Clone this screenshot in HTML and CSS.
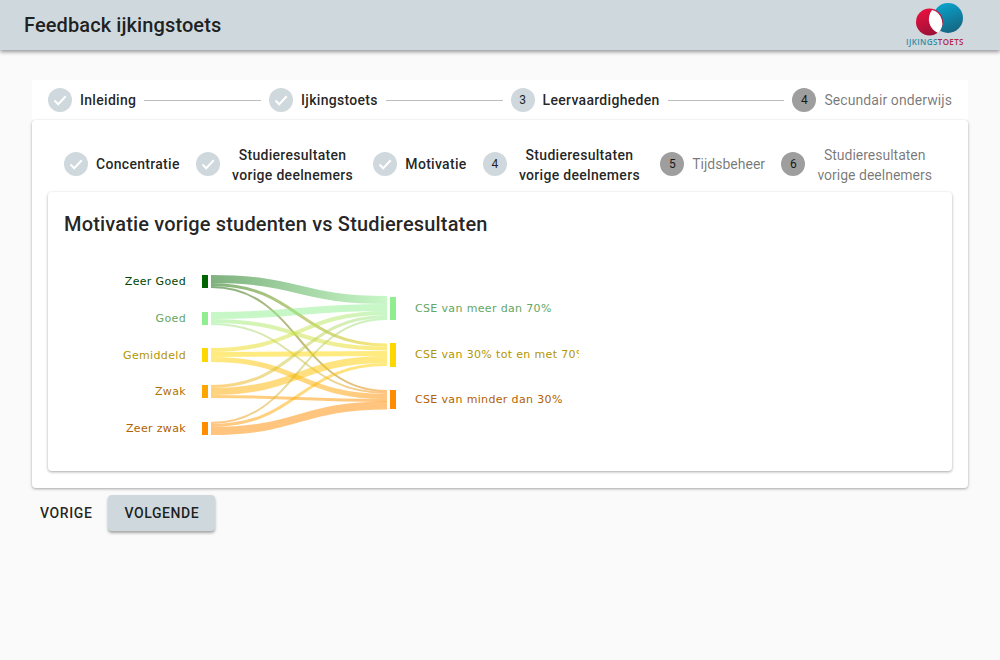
FILE: index.html
```html
<!DOCTYPE html>
<html lang="nl">
<head>
    <meta charset="UTF-8">
    <title>Feedback ijkingstoets</title>
    <link rel="stylesheet" href="styles.css">
</head>
<body>
    <header class="toolbar">
        <span class="toolbar-title">Feedback ijkingstoets</span>
        <div class="logo">
            <svg width="58" height="35" viewBox="0 0 58 35">
                <defs>
                    <linearGradient id="logoBlue" x1="0.3" y1="0" x2="0.7" y2="1">
                        <stop offset="0" stop-color="#07a3cc"/>
                        <stop offset="1" stop-color="#17647f"/>
                    </linearGradient>
                    <linearGradient id="logoRed" x1="0.3" y1="0" x2="0.7" y2="1">
                        <stop offset="0" stop-color="#e8103f"/>
                        <stop offset="1" stop-color="#981236"/>
                    </linearGradient>
                </defs>
                <circle cx="42" cy="16" r="15" fill="url(#logoBlue)"/>
                <circle cx="23.500" cy="20" r="13.500" fill="url(#logoRed)"/>
                <path d="M26 8 A15 15 0 0 0 32 31 A13.500 13.500 0 0 0 26 8 Z" fill="#fff"/>
            </svg>
            <div class="logo-text"><span class="logo-blue">IJKINGS</span><span class="logo-red">TOETS</span></div>
        </div>
    </header>

    <main class="content">
        <div class="stepper stepper-top">
            <div class="step"><span class="step-icon"><svg width="24" height="24" viewBox="0 0 24 24"><path d="M6.500 12.500l3.700 3.700 7.500-7.900" class="check"/></svg></span><span class="step-label">Inleiding</span></div>
            <div class="step-line"></div>
            <div class="step"><span class="step-icon"><svg width="24" height="24" viewBox="0 0 24 24"><path d="M6.500 12.500l3.700 3.700 7.500-7.900" class="check"/></svg></span><span class="step-label">Ijkingstoets</span></div>
            <div class="step-line"></div>
            <div class="step"><span class="step-icon">3</span><span class="step-label">Leervaardigheden</span></div>
            <div class="step-line"></div>
            <div class="step step-off"><span class="step-icon">4</span><span class="step-label">Secundair onderwijs</span></div>
        </div>

        <section class="panel">
            <div class="stepper stepper-inner">
                <div class="step"><span class="step-icon"><svg width="24" height="24" viewBox="0 0 24 24"><path d="M6.500 12.500l3.700 3.700 7.500-7.900" class="check"/></svg></span><span class="step-label">Concentratie</span></div>
                <div class="step"><span class="step-icon"><svg width="24" height="24" viewBox="0 0 24 24"><path d="M6.500 12.500l3.700 3.700 7.500-7.900" class="check"/></svg></span><span class="step-label step-label-wide">Studieresultaten<br>vorige deelnemers</span></div>
                <div class="step"><span class="step-icon"><svg width="24" height="24" viewBox="0 0 24 24"><path d="M6.500 12.500l3.700 3.700 7.500-7.900" class="check"/></svg></span><span class="step-label">Motivatie</span></div>
                <div class="step"><span class="step-icon">4</span><span class="step-label step-label-wide">Studieresultaten<br>vorige deelnemers</span></div>
                <div class="step step-off"><span class="step-icon">5</span><span class="step-label">Tijdsbeheer</span></div>
                <div class="step step-off"><span class="step-icon">6</span><span class="step-label step-label-wide">Studieresultaten<br>vorige deelnemers</span></div>
            </div>

            <div class="card">
                <h2 class="card-title">Motivatie vorige studenten vs Studieresultaten</h2>
                <svg class="sankey" width="515" height="212" viewBox="64 250 515 212">
                    <defs>
                        <linearGradient id="g11" gradientUnits="userSpaceOnUse" x1="211" y1="0" x2="387" y2="0"><stop offset="0" stop-color="#006400"/><stop offset="1" stop-color="#90ee90"/></linearGradient>
                        <linearGradient id="g12" gradientUnits="userSpaceOnUse" x1="211" y1="0" x2="387" y2="0"><stop offset="0" stop-color="#006400"/><stop offset="1" stop-color="#ffd700"/></linearGradient>
                        <linearGradient id="g13" gradientUnits="userSpaceOnUse" x1="211" y1="0" x2="387" y2="0"><stop offset="0" stop-color="#006400"/><stop offset="1" stop-color="#ff8c00"/></linearGradient>
                        <linearGradient id="g21" gradientUnits="userSpaceOnUse" x1="211" y1="0" x2="387" y2="0"><stop offset="0" stop-color="#90ee90"/><stop offset="1" stop-color="#90ee90"/></linearGradient>
                        <linearGradient id="g22" gradientUnits="userSpaceOnUse" x1="211" y1="0" x2="387" y2="0"><stop offset="0" stop-color="#90ee90"/><stop offset="1" stop-color="#ffd700"/></linearGradient>
                        <linearGradient id="g23" gradientUnits="userSpaceOnUse" x1="211" y1="0" x2="387" y2="0"><stop offset="0" stop-color="#90ee90"/><stop offset="1" stop-color="#ff8c00"/></linearGradient>
                        <linearGradient id="g31" gradientUnits="userSpaceOnUse" x1="211" y1="0" x2="387" y2="0"><stop offset="0" stop-color="#ffd700"/><stop offset="1" stop-color="#90ee90"/></linearGradient>
                        <linearGradient id="g32" gradientUnits="userSpaceOnUse" x1="211" y1="0" x2="387" y2="0"><stop offset="0" stop-color="#ffd700"/><stop offset="1" stop-color="#ffd700"/></linearGradient>
                        <linearGradient id="g33" gradientUnits="userSpaceOnUse" x1="211" y1="0" x2="387" y2="0"><stop offset="0" stop-color="#ffd700"/><stop offset="1" stop-color="#ff8c00"/></linearGradient>
                        <linearGradient id="g41" gradientUnits="userSpaceOnUse" x1="211" y1="0" x2="387" y2="0"><stop offset="0" stop-color="#ffa500"/><stop offset="1" stop-color="#90ee90"/></linearGradient>
                        <linearGradient id="g42" gradientUnits="userSpaceOnUse" x1="211" y1="0" x2="387" y2="0"><stop offset="0" stop-color="#ffa500"/><stop offset="1" stop-color="#ffd700"/></linearGradient>
                        <linearGradient id="g43" gradientUnits="userSpaceOnUse" x1="211" y1="0" x2="387" y2="0"><stop offset="0" stop-color="#ffa500"/><stop offset="1" stop-color="#ff8c00"/></linearGradient>
                        <linearGradient id="g51" gradientUnits="userSpaceOnUse" x1="211" y1="0" x2="387" y2="0"><stop offset="0" stop-color="#ff8c00"/><stop offset="1" stop-color="#90ee90"/></linearGradient>
                        <linearGradient id="g52" gradientUnits="userSpaceOnUse" x1="211" y1="0" x2="387" y2="0"><stop offset="0" stop-color="#ff8c00"/><stop offset="1" stop-color="#ffd700"/></linearGradient>
                        <linearGradient id="g53" gradientUnits="userSpaceOnUse" x1="211" y1="0" x2="387" y2="0"><stop offset="0" stop-color="#ff8c00"/><stop offset="1" stop-color="#ff8c00"/></linearGradient>
                    </defs>

                    <g class="links">
                        <path d="M211 279 C299 279 299 300 387 300" stroke="url(#g11)" stroke-width="8"/>
                        <path d="M211 284.500 C299 284.500 299 345 387 345" stroke="url(#g12)" stroke-width="3"/>
                        <path d="M211 287 C299 287 299 391 387 391" stroke="url(#g13)" stroke-width="2"/>
                        <path d="M211 315.500 C299 315.500 299 307.500 387 307.500" stroke="url(#g21)" stroke-width="7"/>
                        <path d="M211 321 C299 321 299 348.500 387 348.500" stroke="url(#g22)" stroke-width="4"/>
                        <path d="M211 324 C299 324 299 393 387 393" stroke="url(#g23)" stroke-width="2"/>
                        <path d="M211 350 C299 350 299 313 387 313" stroke="url(#g31)" stroke-width="4"/>
                        <path d="M211 354.500 C299 354.500 299 353.500 387 353.500" stroke="url(#g32)" stroke-width="5"/>
                        <path d="M211 359.500 C299 359.500 299 396.500 387 396.500" stroke="url(#g33)" stroke-width="5"/>
                        <path d="M211 386.500 C299 386.500 299 316.500 387 316.500" stroke="url(#g41)" stroke-width="3"/>
                        <path d="M211 391.500 C299 391.500 299 359.500 387 359.500" stroke="url(#g42)" stroke-width="7"/>
                        <path d="M211 396.500 C299 396.500 299 400.500 387 400.500" stroke="url(#g43)" stroke-width="3"/>
                        <path d="M211 423 C299 423 299 319 387 319" stroke="url(#g51)" stroke-width="2"/>
                        <path d="M211 425.500 C299 425.500 299 364.500 387 364.500" stroke="url(#g52)" stroke-width="3"/>
                        <path d="M211 431 C299 431 299 405.500 387 405.500" stroke="url(#g53)" stroke-width="8"/>
                    </g>

                    <rect x="202" y="275" width="6" height="13" fill="#006400"/>
                    <rect x="202" y="312" width="6" height="13" fill="#90ee90"/>
                    <rect x="202" y="348" width="6" height="14" fill="#ffd700"/>
                    <rect x="202" y="385" width="6" height="13" fill="#ffa500"/>
                    <rect x="202" y="422" width="6" height="13" fill="#ff8c00"/>
                    <rect x="390" y="297" width="6" height="23" fill="#90ee90"/>
                    <rect x="390" y="343" width="6" height="24" fill="#ffd700"/>
                    <rect x="390" y="390" width="6" height="19" fill="#ff8c00"/>

                    <g class="labels-left">
                        <text x="186" y="285" fill="#004600">Zeer Goed</text>
                        <text x="186" y="322" fill="#64a664">Goed</text>
                        <text x="186" y="359" fill="#b29600">Gemiddeld</text>
                        <text x="186" y="395" fill="#b27300">Zwak</text>
                        <text x="186" y="432" fill="#b26200">Zeer zwak</text>
                    </g>
                    <g class="labels-right">
                        <text x="415" y="312" fill="#64a664">CSE van meer dan 70%</text>
                        <text x="415" y="358" fill="#b29600">CSE van 30% tot en met 70%</text>
                        <text x="415" y="403" fill="#b26200">CSE van minder dan 30%</text>
                    </g>
                </svg>
            </div>
        </section>

        <div class="actions">
            <button class="btn">VORIGE</button>
            <button class="btn btn-raised">VOLGENDE</button>
        </div>
    </main>
</body>
</html>
```

FILE: styles.css
```css
* {
    box-sizing: border-box;
}
body {
    margin: 0;
    background-color: #fafafa;
    font-family: Roboto, sans-serif;
    color: rgba(0, 0, 0, 0.87);
}
.toolbar {
    height: 50px;
    background-color: #cfd8dc;
    box-shadow: 0 2px 4px rgba(0, 0, 0, 0.4);
    display: flex;
    align-items: flex-start;
    justify-content: space-between;
    padding: 0 36px 0 24px;
}
.toolbar-title {
    font-size: 20px;
    font-weight: 500;
    line-height: 50px;
    letter-spacing: 0.1px;
}
.logo {
    display: flex;
    flex-direction: column;
    align-items: center;
    padding-top: 2px;
}
.logo svg {
    display: block;
}
.logo-text {
    font-family: "Open Sans", sans-serif;
    font-size: 8px;
    font-weight: 600;
    line-height: 10px;
    letter-spacing: 0.4px;
}
.logo-blue {
    color: #2f8ea8;
}
.logo-red {
    color: #b02a4c;
}
.content {
    padding: 30px 32px 40px;
}
.stepper {
    display: flex;
    align-items: center;
}
.stepper-top {
    height: 40px;
    padding: 0 16px;
    background-color: #fff;
}
.step {
    display: flex;
    align-items: center;
    gap: 8px;
    flex-shrink: 0;
}
.step-icon {
    width: 24px;
    height: 24px;
    border-radius: 50%;
    background-color: #cfd8dc;
    font-size: 12px;
    display: flex;
    align-items: center;
    justify-content: center;
}
.check {
    fill: none;
    stroke: #fff;
    stroke-width: 2;
}
.step-label {
    font-size: 14px;
    font-weight: 500;
    line-height: 20px;
    letter-spacing: 0.3px;
    text-align: center;
}
.step-label-wide {
    padding: 2px 4px 0;
}
.step-off .step-icon {
    background-color: #9e9e9e;
}
.step-off .step-label {
    font-weight: 400;
    letter-spacing: 0.08px;
    color: rgba(0, 0, 0, 0.54);
}
.stepper-inner .step-off .step-label {
    letter-spacing: 0;
}
.step-line {
    flex: 1;
    height: 1px;
    margin: 0 8px;
    background-color: #bdbdbd;
}
.panel {
    height: 368px;
    padding: 16px;
    background-color: #fff;
    border-radius: 4px;
    box-shadow: 0 1px 3px rgba(0, 0, 0, 0.35);
}
.stepper-inner {
    height: 56px;
    padding: 0 16px;
    justify-content: space-between;
}
.card {
    height: 279px;
    padding: 16px;
    border-radius: 4px;
    box-shadow: 0 1px 3px rgba(0, 0, 0, 0.35);
}
.card-title {
    margin: 0;
    font-size: 20px;
    font-weight: 500;
    line-height: 32px;
    letter-spacing: 0.17px;
}
.sankey {
    display: block;
    margin-top: 10px;
}
.links path {
    fill: none;
    stroke-opacity: 0.5;
}
.sankey text {
    font-family: "DejaVu Sans", sans-serif;
    font-size: 11px;
    letter-spacing: 0.35px;
}
.labels-left text {
    text-anchor: end;
}
.actions {
    display: flex;
    gap: 8px;
    margin-top: 7px;
    align-items: flex-start;
}
.btn {
    height: 36px;
    padding: 0 8px;
    border: none;
    border-radius: 4px;
    background: none;
    font-family: Roboto, sans-serif;
    font-size: 14px;
    font-weight: 500;
    letter-spacing: 0.6px;
    color: rgba(0, 0, 0, 0.87);
}
.btn-raised {
    padding: 0 16px;
    background-color: #cfd8dc;
    box-shadow: 0 2px 3px rgba(0, 0, 0, 0.35);
}
```
